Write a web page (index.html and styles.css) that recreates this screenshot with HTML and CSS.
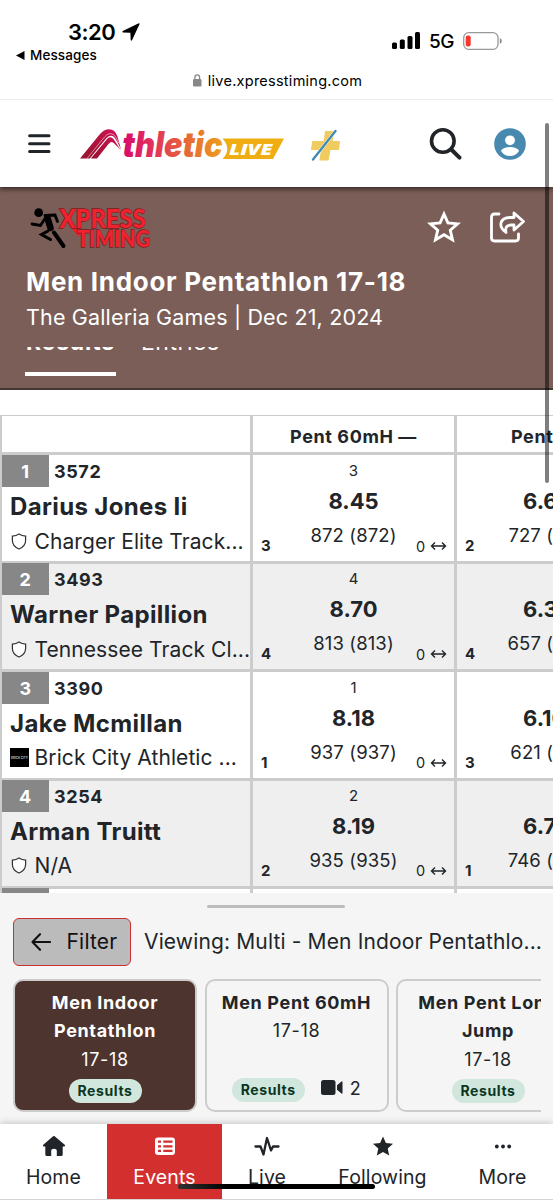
FILE: index.html
```html
<!DOCTYPE html>
<html lang="en">
<head>
<meta charset="utf-8">
<title>Men Indoor Pentathlon 17-18</title>
<link rel="stylesheet" href="styles.css">
</head>
<body>
<div class="screen">
  <header class="status">
    <div class="status-left">
      <div class="clock">3:20 <svg width="18" height="18" viewBox="0 0 18 18"><path d="M17.600 1 10 17.200Q9.200 18.200 8.700 17L8.400 9.800 1 9.500Q-.2 9 .8 8L16.200.4Q17.800-.2 17.600 1Z"/></svg></div>
      <div class="back"><svg width="9" height="9" viewBox="0 0 9 9"><path d="M0 4.500 8.500 0V9Z"/></svg>Messages</div>
    </div>
    <div class="status-right">
      <svg width="29" height="18" viewBox="0 0 29 18"><rect x="0" y="10.500" width="5" height="6.500" rx="1.500"/><rect x="7.800" y="7.500" width="5" height="9.500" rx="1.500"/><rect x="15.500" y="4" width="5" height="13" rx="1.500"/><rect x="23" y="0" width="5" height="17" rx="1.500"/></svg>
      <span class="net">5G</span>
      <svg width="40" height="18" viewBox="0 0 40 18"><rect x=".7" y=".7" width="34.300" height="16.600" rx="5" fill="none" stroke="#999" stroke-width="1.300"/><rect x="2.700" y="3.500" width="5" height="11" rx="2" fill="#f9382f"/><path d="M36.800 6Q38.800 7 38.800 9T36.800 12Z" fill="#888"/></svg>
    </div>
    <div class="url"><svg width="9" height="13" viewBox="0 0 9 13"><rect x="0" y="5" width="8.500" height="7.500" rx="1.200" fill="#888"/><path d="M1.900 5V3.500a2.350 2.600 0 0 1 4.700 0V5" fill="none" stroke="#888" stroke-width="1.300"/></svg><span>live.xpresstiming.com</span></div>
  </header>

  <div class="topbar">
    <svg class="menu" width="23" height="20" viewBox="0 0 23 20"><path d="M1.600 1.700H21M1.600 9.700H21M1.600 17.600H21" stroke="#212529" stroke-width="3" stroke-linecap="round"/></svg>
    <svg class="brand" width="206" height="34" viewBox="0 0 206 34">
      <defs>
        <linearGradient id="word" gradientUnits="userSpaceOnUse" x1="42" y1="0" x2="144" y2="0"><stop offset="0" stop-color="#d9096b"/><stop offset=".3" stop-color="#e2325b"/><stop offset=".65" stop-color="#e66a35"/><stop offset="1" stop-color="#eda01d"/></linearGradient>
        <linearGradient id="peak" x1="0" y1="1" x2="1" y2="0"><stop offset="0" stop-color="#941530"/><stop offset=".7" stop-color="#bd1245"/><stop offset="1" stop-color="#dc0c66"/></linearGradient>
      </defs>
      <g transform="translate(0 1.500)">
        <path d="M0 30 20 5.500Q24 .7 29 .7Q35 .7 37.500 8L41 21Q37 12 34 8.500Q30.500 5.500 26.500 9.500L9.800 30Z" fill="url(#peak)"/>
        <path d="M7 30 24.500 8.500Q29 3.300 33.500 6Q36.500 8.500 39 15" fill="none" stroke="#fff" stroke-width=".5"/>
        <path d="M10.800 30 27.500 10Q30.500 7.500 33.500 10.500L41 22Q35 15 32 13.500Q30.500 13 28.500 15.500L17 30Z" fill="url(#peak)"/>
      </g>
      <text x="42.500" y="30.300" class="wordmark" textLength="100" lengthAdjust="spacingAndGlyphs" fill="url(#word)">thletic</text>
      <path d="M142.500 11.500H204L193 32H142.500Q152 22 142.500 11.500Z" fill="#efad13"/>
      <text x="149" y="28" class="live-word" textLength="43.500" lengthAdjust="spacingAndGlyphs">LIVE</text>
    </svg>
    <svg class="plus" width="32" height="34" viewBox="0 0 32 34"><path d="M16 4h8.500Q25 4 24.900 5L23.800 14H30.500Q31.100 14 31 14.800L30.100 22Q29.900 23 29.300 23H21.500L19.800 32.500Q19.600 33.500 19 33.500H10.300L12 23H2.500Q1.800 23 2 22L3.300 14H14.600Z" fill="#f0cc60"/><path d="M4 32.500 26.500 4" stroke="#fff" stroke-width="3"/><path d="M4 32.500 26.500 4" stroke="#3f8ab5" stroke-width="2.300" stroke-linecap="round"/></svg>
    <svg class="search" width="34" height="34" viewBox="0 0 34 34"><circle cx="13.800" cy="14" r="11.300" fill="none" stroke="#212529" stroke-width="3.600"/><path d="m22.300 22.500 8.200 8.200" stroke="#212529" stroke-width="4" stroke-linecap="round"/></svg>
    <svg class="user" width="32" height="32" viewBox="0 0 32 32"><circle cx="16" cy="16" r="15.800" fill="#4889b0"/><circle cx="16" cy="12.300" r="4.900" fill="#fff"/><path d="M6.900 22.700Q9.500 19 16 19T25.100 22.700Q22 28 16 28T6.900 22.700Z" fill="#fff"/></svg>
  </div>

  <section class="hero">
    <div class="hero-top">
      <svg width="122" height="44" viewBox="0 0 122 44">
        <circle cx="8.700" cy="6.700" r="4.400"/>
        <g fill="none" stroke="#000" stroke-linejoin="miter" stroke-linecap="round"><path d="M17.500 12 20.500 22" stroke-width="6.500"/><path d="M15 9.500 25 9 27.500 15.500" stroke-width="2.800"/><path d="M16 11 10.500 19.500 2 18" stroke-width="2.800"/><path d="M24 26.500 33.500 40" stroke-width="4"/><path d="M18 25 11.500 28.500 20.500 33.500" stroke-width="3"/></g>
        <path d="M40 17 50 29" stroke="#e81f2e" stroke-width="4.500"/>
        <g class="xpress"><text class="big" x="29.500" y="21.500" textLength="86" lengthAdjust="spacingAndGlyphs">XPRESS</text><text x="47" y="41" textLength="73" lengthAdjust="spacingAndGlyphs">TIMING</text></g>
      </svg>
      <svg class="star" width="34" height="34" viewBox="0 0 34 34"><path d="M17 4 20.900 12.900 30.600 13.800 23.300 20.200 25.500 29.800 17 24.700 8.500 29.800 10.700 20.200 3.400 13.800 13.100 12.900Z" fill="none" stroke="#fff" stroke-width="2.900"/></svg>
      <svg class="share" width="36" height="34" viewBox="0 0 36 34"><g fill="none" stroke="#fff" stroke-width="2.800" stroke-linejoin="round" stroke-linecap="round"><path d="M10 4H5.500Q2.500 4 2.500 7V28Q2.500 31 5.500 31H26.500Q29.500 31 29.500 28V24"/><path d="M25 3 34.500 11.500 25 20V15H22Q15.500 15 17 22.500Q11 18 12 13Q13.500 7.500 21 7.500H25Z"/></g></svg>
    </div>
    <h1>Men Indoor Pentathlon 17-18</h1>
    <p class="meet">The Galleria Games | Dec 21, 2024</p>
    <div class="tabs"><b>Results</b><span>Entries</span></div>
    <div class="tab-line"></div>
  </section>

  <main class="results">
    <div class="table">
      <div class="row head"><div class="cell"></div><div class="cell title">Pent 60mH —</div><div class="cell title">Pent LJ —</div></div>
      <div class="row">
        <div class="cell athlete"><div class="bib"><i>1</i>3572</div><div class="name">Darius Jones Ii</div><div class="club"><svg class="shield" viewBox="0 0 16 18"><path d="M8 1Q11 3 15 3.300V8Q15 14 8 17Q1 14 1 8V3.300Q5 3 8 1Z"/></svg><span>Charger Elite Track...</span></div></div>
        <div class="cell score"><small>3</small><strong>8.45</strong><div class="foot"><b>3</b><span>872 (872)</span><em>0 <svg viewBox="0 0 16 10"><path d="M1 5H15M4.500 1.500 1 5 4.500 8.500M11.500 1.500 15 5 11.500 8.500"/></svg></em></div></div>
        <div class="cell score"><small></small><strong>6.60</strong><div class="foot"><b>2</b><span>727 (727)</span><em></em></div></div>
      </div>
      <div class="row alt">
        <div class="cell athlete"><div class="bib"><i>2</i>3493</div><div class="name">Warner Papillion</div><div class="club"><svg class="shield" viewBox="0 0 16 18"><path d="M8 1Q11 3 15 3.300V8Q15 14 8 17Q1 14 1 8V3.300Q5 3 8 1Z"/></svg><span>Tennessee Track Cl...</span></div></div>
        <div class="cell score"><small>4</small><strong>8.70</strong><div class="foot"><b>4</b><span>813 (813)</span><em>0 <svg viewBox="0 0 16 10"><path d="M1 5H15M4.500 1.500 1 5 4.500 8.500M11.500 1.500 15 5 11.500 8.500"/></svg></em></div></div>
        <div class="cell score"><small></small><strong>6.30</strong><div class="foot"><b>4</b><span>657 (657)</span><em></em></div></div>
      </div>
      <div class="row">
        <div class="cell athlete"><div class="bib"><i>3</i>3390</div><div class="name">Jake Mcmillan</div><div class="club"><svg class="crest" viewBox="0 0 19 19"><path d="M0 0H19V19H0Z"/><text x="1" y="10.500" textLength="17" lengthAdjust="spacingAndGlyphs">BRICK CITY</text></svg><span>Brick City Athletic ...</span></div></div>
        <div class="cell score"><small>1</small><strong>8.18</strong><div class="foot"><b>1</b><span>937 (937)</span><em>0 <svg viewBox="0 0 16 10"><path d="M1 5H15M4.500 1.500 1 5 4.500 8.500M11.500 1.500 15 5 11.500 8.500"/></svg></em></div></div>
        <div class="cell score"><small></small><strong>6.10</strong><div class="foot"><b>3</b><span>621 (621)</span><em></em></div></div>
      </div>
      <div class="row alt">
        <div class="cell athlete"><div class="bib"><i>4</i>3254</div><div class="name">Arman Truitt</div><div class="club"><svg class="shield" viewBox="0 0 16 18"><path d="M8 1Q11 3 15 3.300V8Q15 14 8 17Q1 14 1 8V3.300Q5 3 8 1Z"/></svg><span>N/A</span></div></div>
        <div class="cell score"><small>2</small><strong>8.19</strong><div class="foot"><b>2</b><span>935 (935)</span><em>0 <svg viewBox="0 0 16 10"><path d="M1 5H15M4.500 1.500 1 5 4.500 8.500M11.500 1.500 15 5 11.500 8.500"/></svg></em></div></div>
        <div class="cell score"><small></small><strong>6.70</strong><div class="foot"><b>1</b><span>746 (746)</span><em></em></div></div>
      </div>
      <div class="row">
        <div class="cell athlete"><div class="bib"><i></i></div></div><div class="cell"></div><div class="cell"></div>
      </div>
    </div>
  </main>

  <section class="drawer">
    <div class="handle"></div>
    <div class="filter-row">
      <div class="filter"><svg width="20" height="18" viewBox="0 0 20 18"><path d="M19 9H1.500M9 1.200 1.500 9 9 16.800" fill="none" stroke="#111" stroke-width="2.100" stroke-linecap="round" stroke-linejoin="round"/></svg><span>Filter</span></div>
      <div class="viewing">Viewing: Multi - Men Indoor Pentathlo...</div>
    </div>
    <div class="cards">
      <div class="card active"><b>Men Indoor<br>Pentathlon</b><span>17-18</span><div class="tags"><mark>Results</mark></div></div>
      <div class="card"><b>Men Pent 60mH</b><span>17-18</span><div class="tags"><mark>Results</mark><svg width="22" height="15" viewBox="0 0 22 15"><rect width="14.500" height="15" rx="2.500"/><path d="M16 5.200 20.500 1.500Q21.500 1 21.500 2V13Q21.500 14 20.500 13.500L16 9.800Z"/></svg><span class="count">2</span></div></div>
      <div class="card"><b>Men Pent Long<br>Jump</b><span>17-18</span><div class="tags"><mark>Results</mark></div></div>
    </div>
  </section>

  <nav class="nav">
    <div class="item home"><svg width="24" height="22" viewBox="0 0 24 22"><path d="M12 .8 23 10Q23.500 11.500 22 11.500H20.700V19.500Q20.700 21 19.200 21H14.800V15.500Q14.800 13.800 12 13.800T9.200 15.500V21H4.800Q3.300 21 3.300 19.500V11.500H2Q.5 11.500 1 10L10.800 1.500Q12 .4 13.200 1.500Z"/></svg><span>Home</span></div>
    <div class="item events"><svg width="24" height="22" viewBox="0 0 24 22"><rect x="2" y="2.500" width="20" height="17.500" rx="3" fill="#fff"/><path d="M5 6.700H8M10.300 6.700H19.500M5 11.300H8M10.300 11.300H19.500M5 15.900H8M10.300 15.900H19.500" stroke="#d32f2f" stroke-width="2.300"/></svg><span>Events</span></div>
    <div class="item live"><svg width="26" height="22" viewBox="0 0 26 22"><path d="M1.500 11.500H6.500L9.500 19.500 13 3 17 15.500 19 11.500H24.500" fill="none" stroke="#212529" stroke-width="2.300" stroke-linejoin="round" stroke-linecap="round"/></svg><span>Live</span></div>
    <div class="item following"><svg width="24" height="22" viewBox="0 0 24 22"><path d="M12 1.400 14.900 7.900 22 8.700 16.700 13.400 18.200 20.500 12 16.900 5.800 20.500 7.300 13.400 2 8.700 9.100 7.900Z"/></svg><span>Following</span></div>
    <div class="item more"><svg width="24" height="22" viewBox="0 0 24 22"><circle cx="5.800" cy="11.500" r="1.900"/><circle cx="12" cy="11.500" r="1.900"/><circle cx="18.200" cy="11.500" r="1.900"/></svg><span>More</span></div>
  </nav>
  <div class="home-bar"></div>
  <div class="scroll-thumb"></div>
</div>
</body>
</html>
```
FILE: styles.css
```css
* { box-sizing: border-box; }
body { margin: 0; background: #fff; color: #212529; font-family: Inter, "Liberation Sans", sans-serif; }
.screen { position: relative; width: 553px; height: 1200px; overflow: hidden; display: flex; flex-direction: column; }
.screen svg { display: block; flex: none; }

.status { height: 100px; border-bottom: 1px solid #ececec; color: #000; display: grid; grid-template-columns: 1fr 1fr; grid-template-rows: 69px 30px; }
.status-left { padding: 20px 0 0 16px; }
.clock { display: flex; align-items: center; gap: 7px; padding-left: 52px; height: 23px; font-size: 22px; font-weight: 600; letter-spacing: -.5px; }
.back { display: flex; align-items: center; gap: 5px; height: 24px; font-size: 13.500px; font-weight: 500; letter-spacing: .1px; }
.status-right { display: flex; align-items: center; padding: 13px 0 0 115.500px; gap: 8px; }
.net { font-size: 19px; font-weight: 500; letter-spacing: -.5px; width: 26px; }
.url { grid-column: 1 / 3; display: flex; justify-content: center; align-items: center; gap: 6px; padding-bottom: 7px; padding-left: 2px; font-size: 14.500px; letter-spacing: .25px; }

.topbar { position: relative; z-index: 1; height: 87px; background: #fff; display: flex; align-items: center; padding-left: 28px; box-shadow: 0 2px 5px rgba(0,0,0,.6); clip-path: inset(0 0 -10px 0); }
.brand { margin-left: 29px; }
.plus { margin-left: 23px; }
.search { margin-left: 88px; }
.user { margin-left: 30.500px; }
.wordmark { font: italic 900 35px Inter, "Liberation Sans", sans-serif; }
.live-word { font: italic 800 15.500px "Open Sans", Inter, sans-serif; fill: #fff; }

.hero { height: 203px; background: #7b5e57; color: #fff; border-bottom: 2px solid #433733; padding: 19px 0 0 26px; }
.hero-top { display: flex; height: 44px; padding-left: 4px; }
.star { margin-left: 275px; margin-top: 4px; }
.share { margin-left: 28px; margin-top: 4px; }
.xpress { font: 900 23px Lato, sans-serif; fill: #f0222f; stroke: #7d1a1d; stroke-width: 1.400px; paint-order: stroke; }
.big { font-size: 26px; }
h1 { margin: 14px 0 0; height: 36px; line-height: 36px; font-size: 26px; font-weight: 700; letter-spacing: .7px; white-space: nowrap; }
.meet { margin: 0; height: 47px; line-height: 35px; font-size: 21.500px; letter-spacing: .16px; }
.tabs { display: flex; gap: 26px; height: 7px; overflow: hidden; font-size: 23px; line-height: 24px; letter-spacing: .8px; }
.tabs > * { margin-top: -17px; }
.tabs span { letter-spacing: .5px; }
.tab-line { width: 91px; height: 4px; margin: 18px 0 0 -1px; background: #fff; }

.results { height: 503px; padding-top: 25px; overflow: hidden; }
.table { width: 660px; border-top: 1px solid #ccc; border-left: 2px solid #ccc; }
.row { display: grid; grid-template-columns: 251px 204px 190px; height: 108.250px; }
.row.alt { background: #efefef; }
.row.head { height: 39px; }
.cell { border-right: 3px solid #ccc; border-bottom: 3px solid #ccc; white-space: nowrap; min-width: 0; }
.title { padding-top: 5px; text-align: center; font-size: 18px; font-weight: 700; letter-spacing: .6px; line-height: 31px; }
.title:last-child { text-align: left; padding-left: 54px; }
.bib { display: flex; gap: 5px; height: 32px; line-height: 33px; font-size: 18px; font-weight: 700; letter-spacing: .6px; }
.bib i { width: 47px; background: #878787; color: #fff; font-style: normal; text-align: center; }
.name { height: 39px; line-height: 39px; padding-left: 8px; font-size: 24px; font-weight: 700; letter-spacing: .36px; }
.club { display: flex; align-items: center; height: 30px; padding-left: 8px; gap: 5.500px; font-size: 21px; letter-spacing: .08px; }
.shield { width: 16px; height: 17px; margin: 0 2px 0 1px; fill: #fff; stroke: #333; stroke-width: 1.300px; }
.crest { width: 19px; height: 19px; }
.crest text { font: 700 3px Inter, sans-serif; fill: #bbb; letter-spacing: 0; }
.score { display: flex; flex-direction: column; text-align: center; }
.score small { height: 32px; line-height: 32px; font-size: 15px; }
.score strong { height: 30px; line-height: 29px; font-size: 22px; font-weight: 700; }
.score:last-child strong { text-align: left; padding-left: 66px; }
.foot { display: grid; grid-template-columns: 40px 1fr 40px; height: 44px; font-size: 18.500px; }
.foot span { line-height: 37px; letter-spacing: .12px; margin: 0 -10px; }
.foot b { padding-left: 8px; text-align: left; font-size: 15px; line-height: 58px; }
.foot em { display: flex; gap: 5px; align-items: center; height: 58px; padding-left: 2px; font-style: normal; font-size: 14.500px; }
.foot em svg { width: 17px; height: 10px; fill: none; stroke: #212529; stroke-width: 1.400px; }

.drawer { height: 231px; background: #f5f5f5; padding: 12px 12px 0 13px; display: flex; flex-direction: column; }
.handle { width: 138px; height: 3px; margin-left: 194px; border-radius: 2px; background: #bdbdbd; }
.filter-row { display: flex; margin-top: 10px; height: 48px; align-items: center; gap: 13px; }
.filter { flex: none; width: 118px; height: 48px; border: 1.500px solid #c9302f; border-radius: 6px; background: #bbb; color: #111; display: flex; align-items: center; gap: 16px; padding: 0 0 1px 16.500px; font-size: 21px; letter-spacing: .2px; }
.viewing { padding-bottom: 2px; font-size: 21px; letter-spacing: .14px; white-space: nowrap; }
.cards { display: flex; gap: 7.500px; margin-top: 13px; height: 133px; overflow: hidden; }
.card { flex: none; width: 184px; height: 133px; border: 2px solid #ccc; border-radius: 10px; padding-top: 8px; display: flex; flex-direction: column; align-items: center; text-align: center; font-size: 18px; line-height: 28.250px; letter-spacing: .65px; white-space: nowrap; }
.card.active { background: #4e342e; color: #fff; }
.tags { margin: auto 0 7px; display: flex; align-items: center; }
.tags mark { width: 73px; height: 24px; border-radius: 12px; background: #d1e7dd; color: #0a3622; font-size: 14px; font-weight: 700; line-height: 23px; letter-spacing: .6px; }
.tags svg { margin: 0 7px 4px 16px; fill: #212529; }
.count { height: 27px; line-height: 25px; }

.nav { height: 76px; position: relative; background: #fff; border-bottom: 1px solid #d5d5d5; box-shadow: 0 -1px 7px rgba(0,0,0,.2); display: grid; grid-template-columns: 107px 115px 90px 141px 99px; }
.item { display: flex; flex-direction: column; align-items: center; padding-top: 11px; font-size: 19.500px; letter-spacing: .1px; }
.item svg { fill: #212529; }
.item span { line-height: 41px; }
.events { background: #d32f2f; color: #fff; }
.home-bar { position: absolute; left: 178px; top: 1184px; width: 197px; height: 5px; border-radius: 3px; background: linear-gradient(90deg, #333, #000 25%); }
.scroll-thumb { position: absolute; z-index: 2; left: 545px; top: 123px; width: 4px; height: 360px; border-radius: 2px; background: rgba(0,0,0,.5); }
```
